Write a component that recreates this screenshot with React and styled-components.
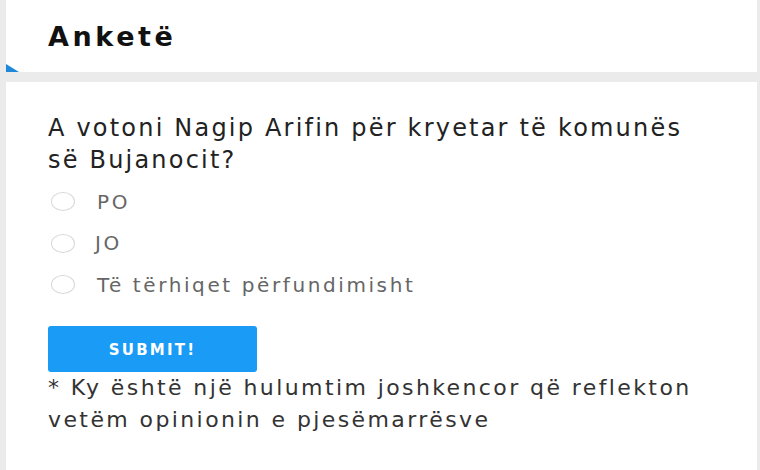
import React from 'react'
import styled, { createGlobalStyle } from 'styled-components'

const Global = createGlobalStyle`
  html, body {
    margin: 0;
    padding: 0;
    background: #ebebeb;
  }
  body {
    font-family: "DejaVu Sans", "Liberation Sans", sans-serif;
  }
`

const Page = styled.div`
  width: 760px;
  height: 470px;
  box-sizing: border-box;
  padding: 0 3px 0 6px;
  display: flex;
  flex-direction: column;
  gap: 10px;
  overflow: hidden;
`

const Header = styled.header`
  position: relative;
  height: 72px;
  background: #ffffff;
  display: flex;
  align-items: center;
  padding-left: 42px;
  box-sizing: border-box;
`

const Corner = styled.span`
  position: absolute;
  left: 0;
  bottom: 0;
  width: 0;
  height: 0;
  border-left: 13px solid #1e88d9;
  border-top: 8px solid transparent;
`

const Title = styled.h2`
  margin: 0;
  font-size: 27px;
  font-weight: 700;
  letter-spacing: 3.6px;
  color: #111;
`

const Body = styled.section`
  flex: 1;
  background: #ffffff;
  padding: 30px 45px 0 42px;
  box-sizing: border-box;
`

const Question = styled.p`
  margin: 0 0 5px;
  font-size: 24px;
  line-height: 32px;
  letter-spacing: 2.2px;
  color: #222;
`

const Options = styled.div`
  display: flex;
  flex-direction: column;
`

const Option = styled.label`
  display: flex;
  align-items: center;
  height: 41.5px;
  font-size: 20px;
  letter-spacing: 2.6px;
  color: #666;
`

const Radio = styled.span`
  width: 24px;
  height: 19px;
  border: 1px solid #d8d8d8;
  border-radius: 50%;
  box-sizing: border-box;
  margin: 0 ${p => p.$gap}px 0 3px;
`

const Submit = styled.button`
  margin-top: 20px;
  width: 209px;
  height: 46px;
  padding: 3px 0 0;
  border: none;
  border-radius: 3px;
  background: #1a9bf6;
  color: #fff;
  font-family: "DejaVu Sans", "Liberation Sans", sans-serif;
  font-size: 15px;
  font-weight: 700;
  letter-spacing: 2.2px;
`

const Note = styled.p`
  margin: 0;
  font-size: 22px;
  line-height: 32px;
  letter-spacing: 2.4px;
  color: #333;
`

const options = [
  { label: 'PO', gap: 22 },
  { label: 'JO', gap: 20 },
  { label: 'Të tërhiqet përfundimisht', gap: 22 },
]

export default function App() {
  return (
    <Page>
      <Global />
      <Header>
        <Title>Anketë</Title>
        <Corner />
      </Header>
      <Body>
        <Question>A votoni Nagip Arifin për kryetar të komunës së Bujanocit?</Question>
        <Options>
          {options.map(o => (
            <Option key={o.label}>
              <Radio $gap={o.gap} />
              {o.label}
            </Option>
          ))}
        </Options>
        <Submit>SUBMIT!</Submit>
        <Note>* Ky është një hulumtim joshkencor që reflekton vetëm opinionin e pjesëmarrësve</Note>
      </Body>
    </Page>
  )
}
